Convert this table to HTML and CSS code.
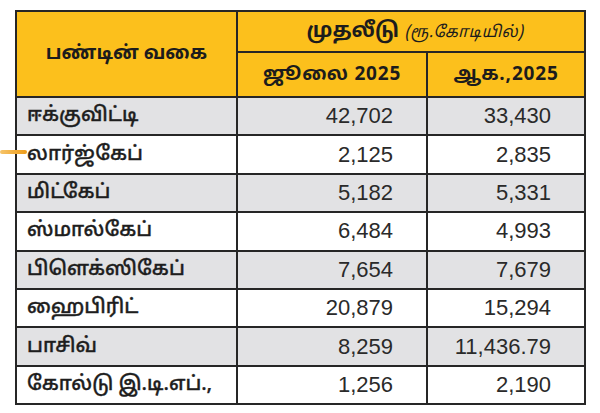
FILE: index.html
```html
<!DOCTYPE html>
<html lang="ta">
<head>
<meta charset="utf-8">
<link rel="stylesheet" href="styles.css">
</head>
<body>
<div class="page">
  <div class="accent"></div>
  <table class="fund-table">
    <colgroup>
      <col class="c1"><col class="c2"><col class="c3">
    </colgroup>
    <thead>
      <tr class="h1">
        <th rowspan="2" class="type">பண்டின் வகை</th>
        <th colspan="2" class="invest">முதலீடு <span class="unit">(ரூ.கோடியில்)</span></th>
      </tr>
      <tr class="h2">
        <th class="month">ஜூலை 2025</th>
        <th class="month">ஆக.,2025</th>
      </tr>
    </thead>
    <tbody>
      <tr class="grey"><td class="label">ஈக்குவிட்டி</td><td class="num">42,702</td><td class="num">33,430</td></tr>
      <tr><td class="label">லார்ஜ்கேப்</td><td class="num">2,125</td><td class="num">2,835</td></tr>
      <tr class="grey"><td class="label">மிட்கேப்</td><td class="num">5,182</td><td class="num">5,331</td></tr>
      <tr><td class="label">ஸ்மால்கேப்</td><td class="num">6,484</td><td class="num">4,993</td></tr>
      <tr class="grey"><td class="label">பிளெக்ஸிகேப்</td><td class="num">7,654</td><td class="num">7,679</td></tr>
      <tr><td class="label">ஹைபிரிட்</td><td class="num">20,879</td><td class="num">15,294</td></tr>
      <tr class="grey"><td class="label">பாசிவ்</td><td class="num">8,259</td><td class="num">11,436.79</td></tr>
      <tr><td class="label">கோல்டு இ.டி.எப்.,</td><td class="num">1,256</td><td class="num">2,190</td></tr>
    </tbody>
  </table>
</div>
</body>
</html>
```

FILE: styles.css
```css
html, body {
  margin: 0;
  padding: 0;
  background: #ffffff;
}
.page {
  position: relative;
  width: 600px;
  height: 413px;
  padding: 10px 0 0 15px;
  box-sizing: border-box;
  font-family: "Noto Sans Tamil", "Lohit Tamil", "Noto Sans", "Liberation Sans", sans-serif;
  color: #222;
}
.accent {
  position: absolute;
  left: 0;
  top: 150px;
  width: 27px;
  height: 4px;
  background: linear-gradient(to right, #f6c46a, #ee9b16);
  border-radius: 2px;
}
.fund-table {
  border-collapse: collapse;
  table-layout: fixed;
  width: 569px;
}
.c1 { width: 221px; }
.c2 { width: 190px; }
.c3 { width: 158px; }
.fund-table th,
.fund-table td {
  border: 2px solid #262626;
  padding: 0;
}
.fund-table thead th {
  background: #fcc01c;
  color: #1c1c1c;
  font-weight: 700;
  text-align: center;
}
.h1 { height: 41px; }
.h2 { height: 45px; }
.type { font-size: 19px; }
.invest {
  font-size: 21px;
  text-align: center;
  padding-left: 8px !important;
}
.unit {
  font-size: 16px;
  font-weight: 400;
  font-style: italic;
  letter-spacing: 0.3px;
}
.month {
  font-size: 19px;
  letter-spacing: 0.8px;
}
.fund-table tbody tr { height: 38.4px; }
.fund-table tbody tr.grey td { background: #e2e2e4; }
.label {
  font-size: 20px;
  font-weight: 500;
  -webkit-text-stroke: 0.35px #1e1e1e;
  text-align: left;
  padding-left: 10px !important;
  color: #1e1e1e;
}
.num {
  font-family: "Liberation Sans", Arial, sans-serif;
  font-size: 22px;
  text-align: right;
  padding-right: 33px !important;
  color: #2a2a2a;
}
```
